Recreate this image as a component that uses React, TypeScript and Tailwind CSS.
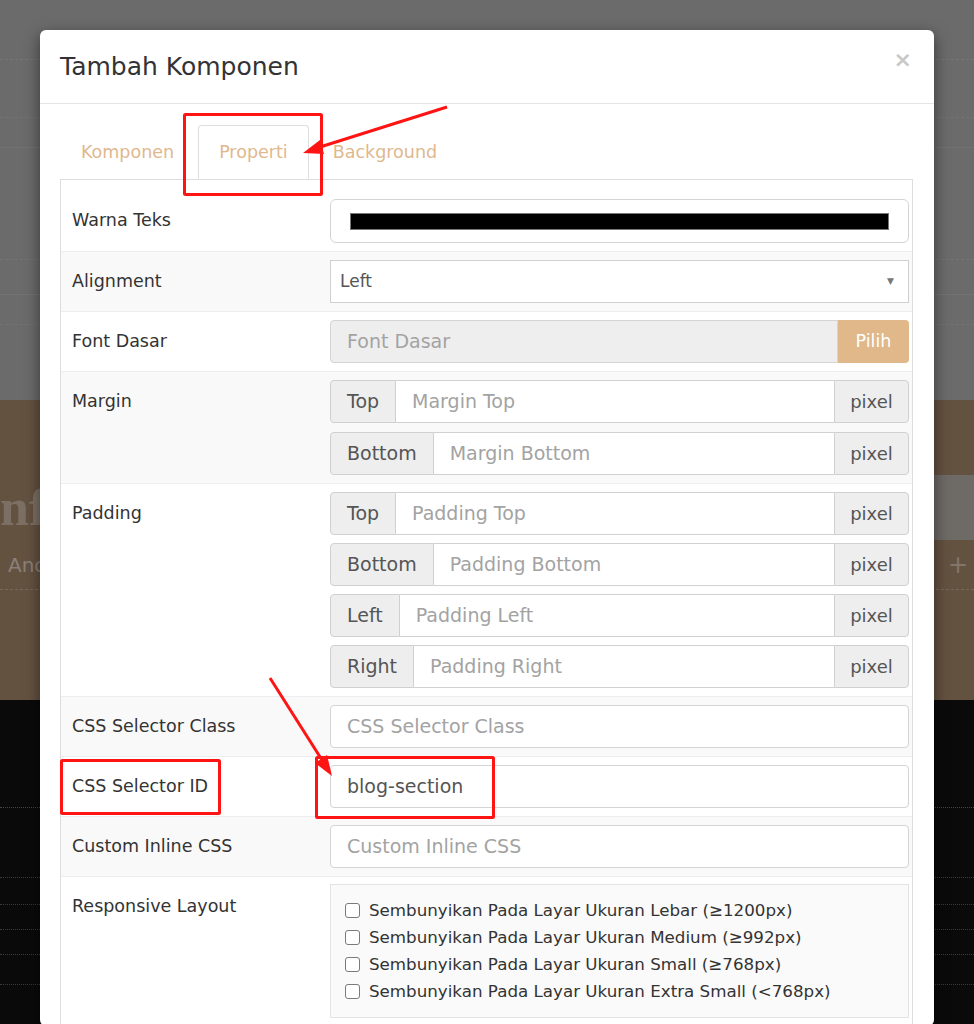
import React from 'react';

const tabs = [
  { label: 'Komponen', active: false },
  { label: 'Properti', active: true },
  { label: 'Background', active: false },
];

const checks = [
  'Sembunyikan Pada Layar Ukuran Lebar (≥1200px)',
  'Sembunyikan Pada Layar Ukuran Medium (≥992px)',
  'Sembunyikan Pada Layar Ukuran Small (≥768px)',
  'Sembunyikan Pada Layar Ukuran Extra Small (<768px)',
];

function Row({ label, striped, children, first, tight }: { label: string; striped?: boolean; children: React.ReactNode; first?: boolean; tight?: boolean }) {
  return (
    <div
      className={
        'grid grid-cols-[269px_1fr] py-[8px] ' +
        (first ? '' : 'border-t border-[#eceef1] ') +
        (striped ? 'bg-[#f9f9f9]' : 'bg-white')
      }
    >
      <div className="pl-[11px] leading-[43px] text-[17.5px] text-[#333]">{label}</div>
      <div className={'pr-[3px] flex flex-col ' + (tight ? 'gap-[8px]' : 'gap-[9px]')}>{children}</div>
    </div>
  );
}

function TextInput({ placeholder, value }: { placeholder?: string; value?: string }) {
  return (
    <div className="h-[43px] border border-[#d4d4d4] rounded-[4px] bg-white flex items-center px-[16px] text-[19px]">
      {value ? <span className="text-[#555]">{value}</span> : <span className="text-[#a3a3a3]">{placeholder}</span>}
    </div>
  );
}

function Group({ addon, placeholder }: { addon: string; placeholder: string }) {
  return (
    <div className="h-[43px] flex text-[19px]">
      <div className="flex items-center px-[16px] bg-[#eeeeee] border border-[#d0d0d0] rounded-l-[4px] text-[#555]">{addon}</div>
      <div className="flex-1 flex items-center px-[16px] border-y border-[#d0d0d0] bg-white text-[#a3a3a3]">{placeholder}</div>
      <div className="w-[75px] flex items-center justify-center bg-[#eeeeee] border border-[#d0d0d0] rounded-r-[4px] text-[#555] text-[18px]">pixel</div>
    </div>
  );
}

export default function App() {
  return (
    <div className="relative h-[1024px] w-[974px] overflow-hidden font-['DejaVu_Sans',sans-serif]">
      {/* dimmed page behind the modal */}
      <div className="h-[400px] bg-[#6b6b6b] flex flex-col">
        <div className="h-[60px] border-b border-dashed border-[#757575]" />
        <div className="h-[58px] border-b border-dashed border-[#737373]" />
        <div className="h-[30px] border-b border-[#727272]" />
        <div className="h-[112px] border-b border-dashed border-[#737373]" />
        <div className="h-[35px] border-b border-[#737373]" />
        <div className="h-[30px] border-b border-dashed border-[#727272]" />
      </div>
      <div className="h-[300px] bg-[#645241] flex flex-col">
        <div className="h-[75px]" />
        <div className="h-[65px] flex">
          <div className="w-[40px] flex items-center">
            <span className="text-[52px] leading-none font-bold text-[#7c7064] font-['Liberation_Serif',serif]">nfo</span>
          </div>
          <div className="flex-1 bg-[#6e6a66]" />
        </div>
        <div className="h-[50px] flex items-center justify-between border-b border-dashed border-[#76685a]">
          <span className="ml-[8px] text-[20px] text-[#8a8078]">And</span>
          <span className="mr-[6px] text-[24px] text-[#82766a]">+</span>
        </div>
      </div>
      <div className="h-[324px] bg-[#0a0a0a] flex flex-col">
        <div className="h-[108px] border-b border-dotted border-[#444]" />
        <div className="h-[70px] border-b border-dotted border-[#3a3a3a]" />
        <div className="h-[27px] border-b border-dotted border-[#3a3a3a]" />
        <div className="h-[25px] border-b border-dotted border-[#3a3a3a]" />
        <div className="h-[25px] border-b border-dotted border-[#3a3a3a]" />
        <div className="h-[30px] border-b border-dotted border-[#3a3a3a]" />
      </div>

      {/* modal */}
      <div className="absolute left-[40px] top-[30px] w-[894px] bg-white rounded-[6px] shadow-[0_5px_15px_rgba(0,0,0,0.5)]">
        <div className="h-[74px] flex items-center justify-between px-[20px] border-b border-[#e5e5e5]">
          <h4 className="text-[25px] text-[#333]">Tambah Komponen</h4>
          <span className="text-[22px] font-bold text-[#c8c8c8] mr-[2px] mt-[-14px]">×</span>
        </div>
        <div className="pt-[21px] pl-[20px] pr-[21px]">
          <div className="flex border-b border-[#dddddd]">
            {tabs.map(t => (
              <div
                key={t.label}
                className={
                  'h-[54px] flex items-center px-[20px] mr-[3px] text-[17.5px] text-[#dfb88e] rounded-t-[4px] border ' +
                  (t.active ? 'border-[#dddddd] border-b-white bg-white -mb-px' : 'border-transparent')
                }
              >
                {t.label}
              </div>
            ))}
          </div>
          <div className="border-x border-[#dddddd] pt-[11px]">
            <Row label="Warna Teks" first>
              <div className="h-[44px] border border-[#d4d4d4] rounded-[6px] bg-white flex items-center px-[19px]">
                <div className="w-full h-[17px] bg-black border border-[#777]" />
              </div>
            </Row>
            <Row label="Alignment" striped>
              <div className="h-[43px] border border-[#d0d0d0] bg-white flex items-center justify-between pl-[9px] pr-[14px] text-[17px] text-[#555]">
                <span>Left</span>
                <span className="text-[9px] text-[#777]">▼</span>
              </div>
            </Row>
            <Row label="Font Dasar">
              <div className="h-[43px] flex text-[19px]">
                <div className="flex-1 flex items-center px-[16px] bg-[#eeeeee] border border-[#d4d4d4] rounded-l-[4px] text-[#a3a3a3]">Font Dasar</div>
                <div className="w-[71px] flex items-center justify-center bg-[#e0b88a] rounded-r-[4px] text-white text-[17.5px]">Pilih</div>
              </div>
            </Row>
            <Row label="Margin" striped>
              <Group addon="Top" placeholder="Margin Top" />
              <Group addon="Bottom" placeholder="Margin Bottom" />
            </Row>
            <Row label="Padding" tight>
              <Group addon="Top" placeholder="Padding Top" />
              <Group addon="Bottom" placeholder="Padding Bottom" />
              <Group addon="Left" placeholder="Padding Left" />
              <Group addon="Right" placeholder="Padding Right" />
            </Row>
            <Row label="CSS Selector Class" striped>
              <TextInput placeholder="CSS Selector Class" />
            </Row>
            <Row label="CSS Selector ID">
              <TextInput value="blog-section" />
            </Row>
            <Row label="Custom Inline CSS" striped>
              <TextInput placeholder="Custom Inline CSS" />
            </Row>
            <Row label="Responsive Layout">
              <div className="-mt-[1px] bg-[#fafafa] border border-[#e3e3e3] pl-[14px] pt-[12px] pb-[12px]">
                {checks.map(c => (
                  <label key={c} className="flex items-center h-[27px] text-[16.7px] text-[#333]">
                    <span className="w-[15px] h-[15px] border border-[#7a7a7a] rounded-[3px] bg-white mr-[9px]" />
                    {c}
                  </label>
                ))}
              </div>
            </Row>
          </div>
        </div>
      </div>

      {/* red annotations */}
      <svg className="absolute inset-0 pointer-events-none" width="974" height="1024" viewBox="0 0 974 1024">
        <g stroke="#ff1414" strokeWidth="3" fill="none">
          <rect x="184.5" y="114.5" width="137" height="80" rx="1" />
          <rect x="61.5" y="760.5" width="158" height="53" rx="1" />
          <rect x="316.5" y="757.5" width="177" height="60" rx="1" />
          <line x1="447" y1="107" x2="320" y2="147" />
          <line x1="270" y1="678" x2="322" y2="760" />
        </g>
        <g fill="#ff1414">
          <polygon points="303,153 324,154 320,140" />
          <polygon points="332,776 315,763 327,755" />
        </g>
      </svg>
    </div>
  );
}
